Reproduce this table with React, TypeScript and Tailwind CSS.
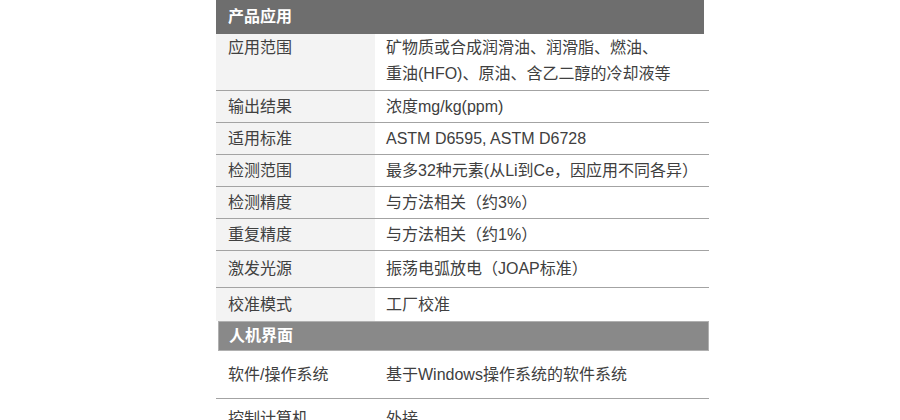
const font = { fontFamily: '"Liberation Sans", "Noto Sans CJK SC", sans-serif' };

type Row = { label: string; value: string[]; h: string; shade?: boolean; border?: boolean; top?: boolean };

const appRows: Row[] = [
  {
    label: "应用范围",
    value: ["矿物质或合成润滑油、润滑脂、燃油、", "重油(HFO)、原油、含乙二醇的冷却液等"],
    h: "h-[57px]",
    top: true,
  },
  { label: "输出结果", value: ["浓度mg/kg(ppm)"], h: "h-[32px]" },
  { label: "适用标准", value: ["ASTM D6595, ASTM D6728"], h: "h-[32px]" },
  { label: "检测范围", value: ["最多32种元素(从Li到Ce，因应用不同各异）"], h: "h-[32px]" },
  { label: "检测精度", value: ["与方法相关（约3%）"], h: "h-[32px]" },
  { label: "重复精度", value: ["与方法相关（约1%）"], h: "h-[32px]" },
  { label: "激发光源", value: ["振荡电弧放电（JOAP标准）"], h: "h-[37px]" },
  { label: "校准模式", value: ["工厂校准"], h: "h-[33px]", border: false },
];

const hmiRows: Row[] = [
  { label: "软件/操作系统", value: ["基于Windows操作系统的软件系统"], h: "h-[48px]", shade: false },
  { label: "控制计算机", value: ["外接"], h: "h-[40px]", shade: false, border: false },
];

function SpecRow({ row }: { row: Row }) {
  const shade = row.shade !== false;
  const border = row.border !== false;
  return (
    <div
      className={`flex ${row.h} ${border ? "border-b border-[#a3a3a3]" : ""} text-[16px] text-[#404040]`}
    >
      <div
        className={`w-[159px] shrink-0 pl-3 flex ${row.top ? "items-start pt-[1px]" : "items-center"} ${
          shade ? "bg-[#f3f3f3]" : ""
        }`}
      >
        <span className={row.top ? "leading-[26px]" : ""}>{row.label}</span>
      </div>
      <div className={`flex-1 pl-[11px] flex flex-col ${row.top ? "justify-start pt-[1px]" : "justify-center"}`}>
        {row.value.map((v) => (
          <span key={v} className="leading-[26px]">
            {v}
          </span>
        ))}
      </div>
    </div>
  );
}

export default function App() {
  return (
    <div className="w-[900px] h-[420px] bg-white overflow-hidden" style={font}>
      <div className="ml-[216px] w-[493px]">
        <div className="w-[488px] h-[34px] bg-[#6e6e6e] text-white font-bold text-[16px] pl-3 flex items-center">
          产品应用
        </div>
        {appRows.map((r) => (
          <SpecRow key={r.label} row={r} />
        ))}
        <div className="h-[30px] ml-[2px] bg-[#898989] border border-[#b0b0b0] text-white font-bold text-[16px] pl-[10px] flex items-center">
          人机界面
        </div>
        {hmiRows.map((r) => (
          <SpecRow key={r.label} row={r} />
        ))}
      </div>
    </div>
  );
}
